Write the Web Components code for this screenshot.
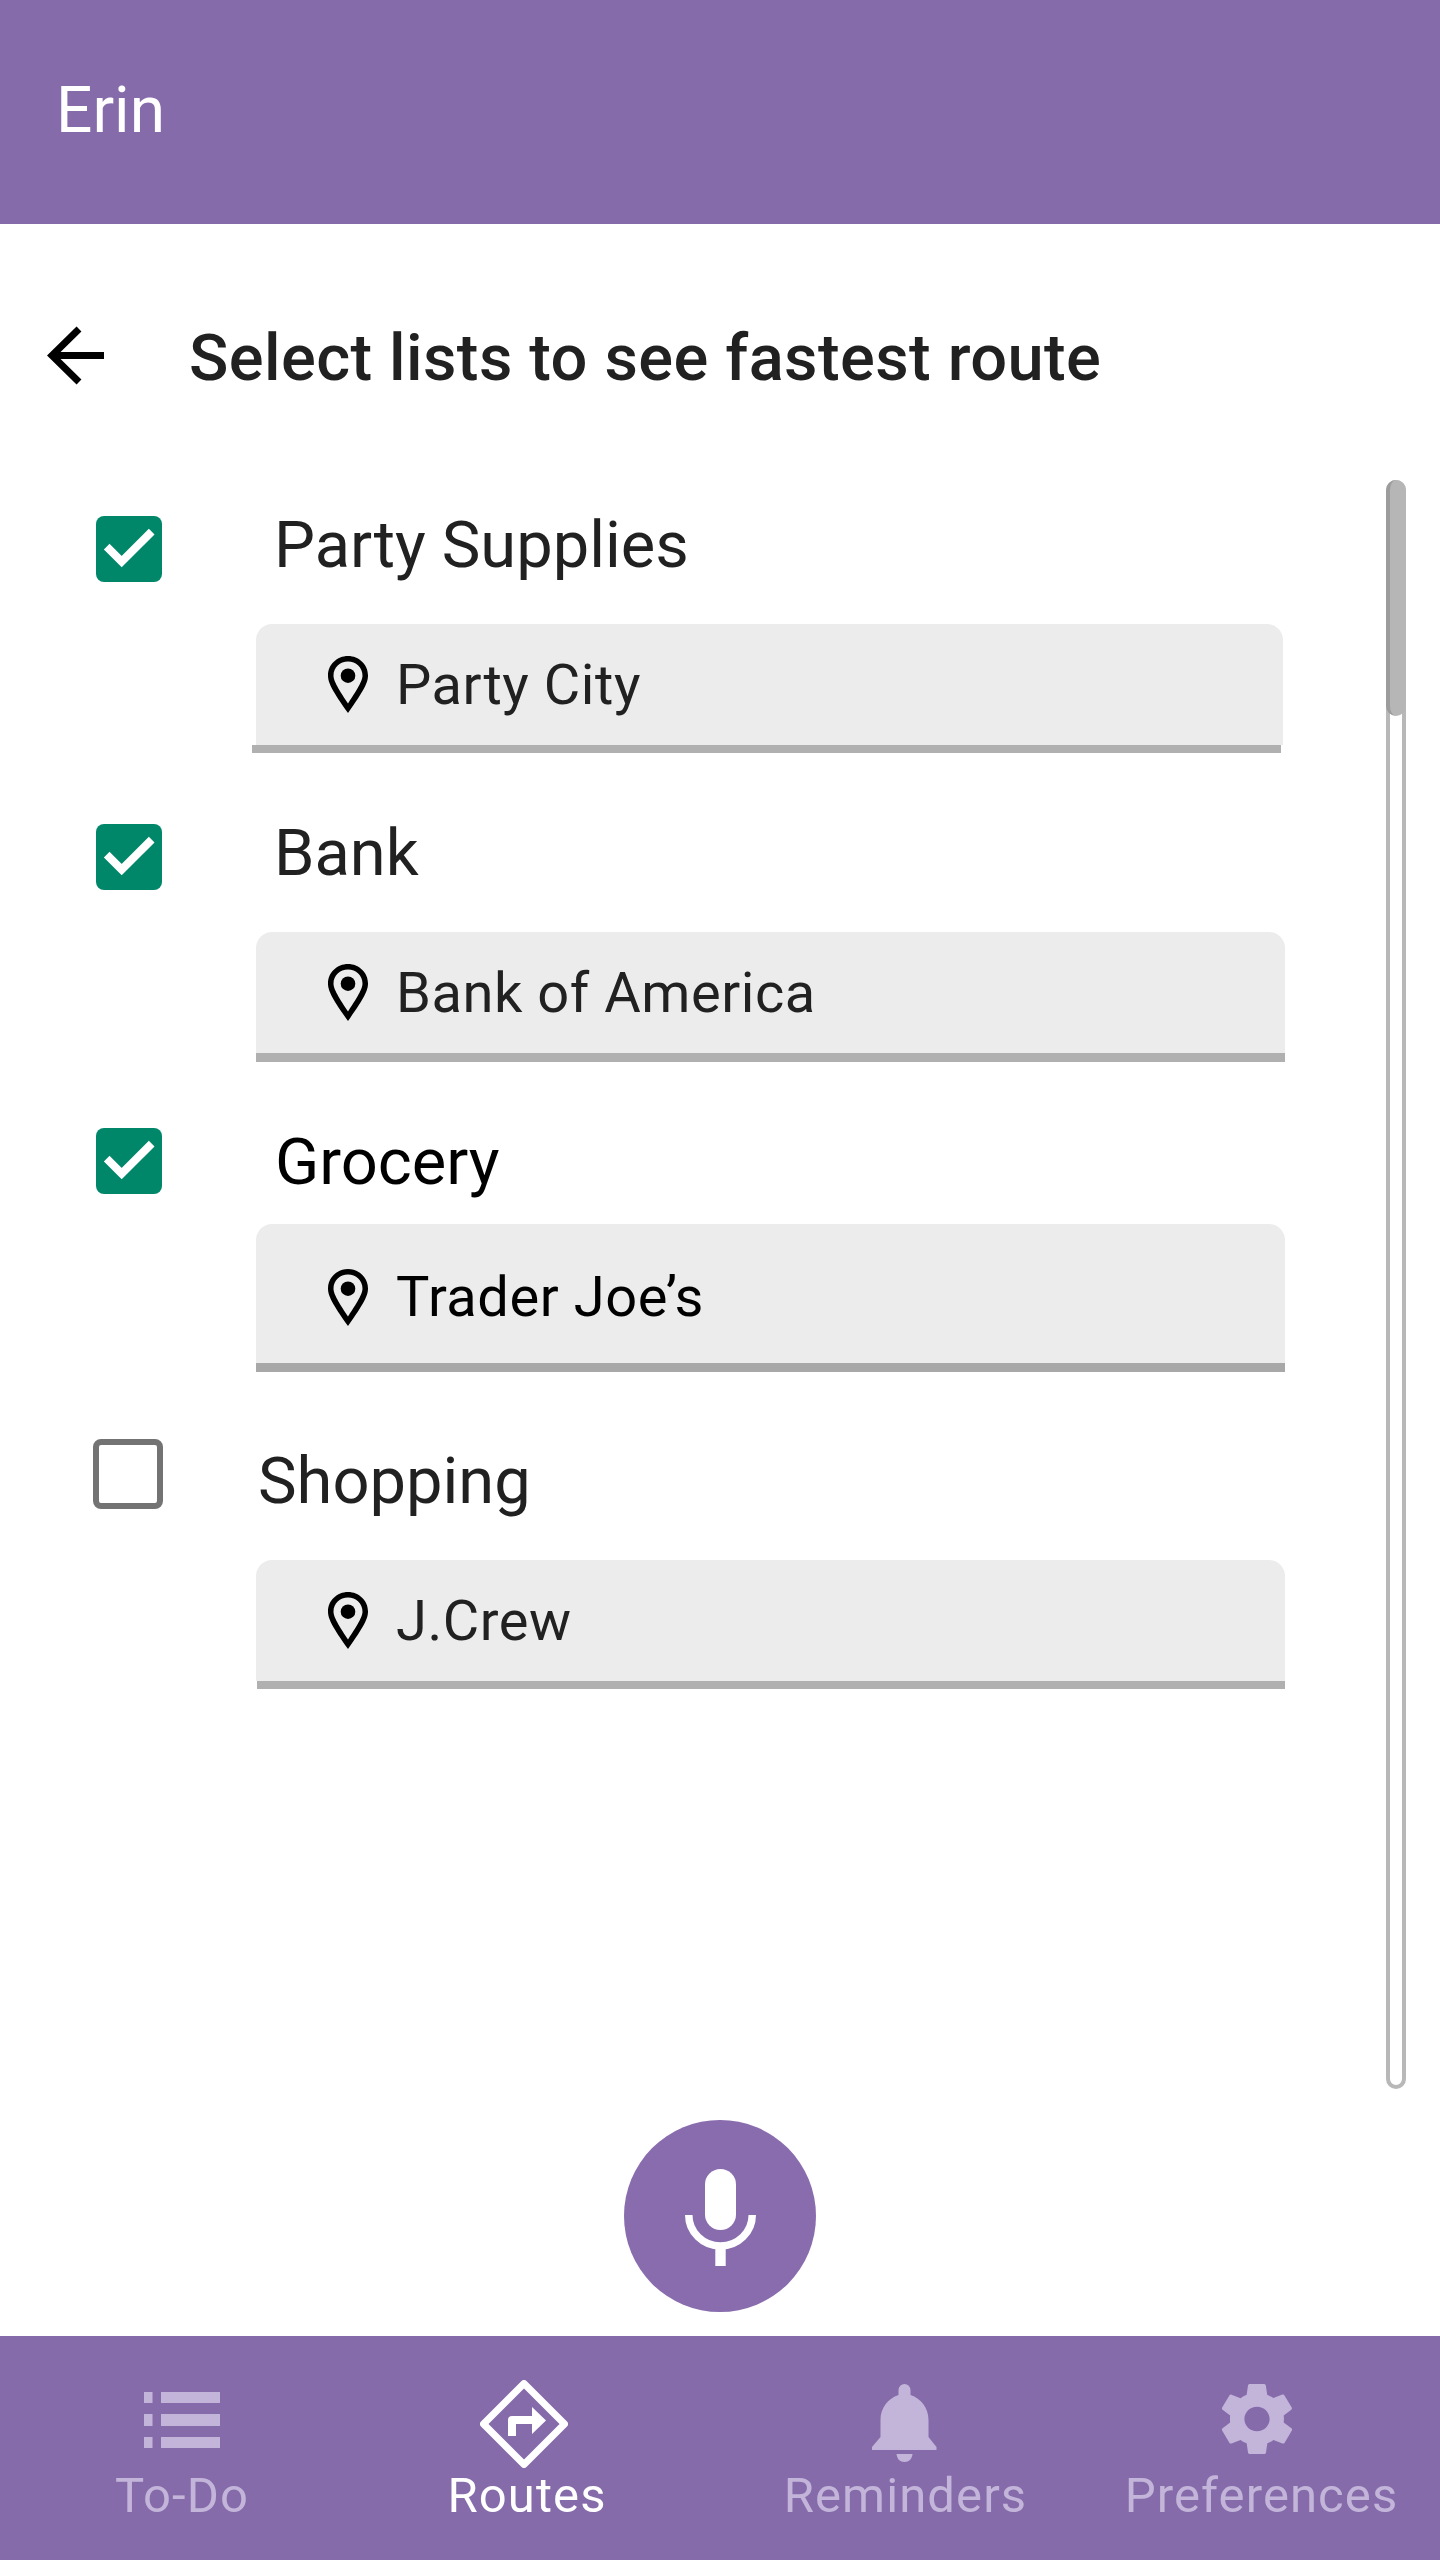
<!doctype html>
<html>
<head>
<meta charset="utf-8">
<style>
  html, body { margin: 0; height: 100%; }
  body {
    width: 1440px;
    height: 2560px;
    display: flex;
    flex-direction: column;
    background: #fff;
    color: #212121;
    font-family: Roboto, "Liberation Sans", sans-serif;
    overflow: hidden;
  }
</style>
</head>
<body>
  <app-header>Erin</app-header>
  <page-title>Select lists to see fastest route</page-title>
  <list-pane>
    <route-row checked label="Party Supplies" style="--head-h:144px;--check-y:36px;--label-y:33px;--label-x:274px;--chip-w:1027px;--rule-x:252px;--rule-h:8px">Party City</route-row>
    <route-row checked label="Bank" style="--head-h:179px;--check-y:71px;--label-y:68px;--label-x:274px">Bank of America</route-row>
    <route-row checked label="Grocery" style="--head-h:162px;--check-y:66px;--label-y:68px;--label-x:275px;--ink:#000;--chip-h:139px;--chip-pad:7px;--rule-c:#a8a8a8">Trader Joe’s</route-row>
    <route-row label="Shopping" style="--head-h:188px;--check-y:67px;--label-y:77px;--label-x:258px;--rule-x:257px;--rule-w:1028px;--rule-h:8px">J.Crew</route-row>
  </list-pane>
  <mic-button></mic-button>
  <bottom-nav>
    <nav-item icon="list" style="--icon-lift:8px">To-Do</nav-item>
    <nav-item icon="route" active style="--icon-left:6px">Routes</nav-item>
    <nav-item icon="bell" style="--icon-lift:2px;--icon-left:2px">Reminders</nav-item>
    <nav-item icon="gear" style="--icon-lift:10px;--icon-left:10px">Preferences</nav-item>
  </bottom-nav>

<script>
class AppHeader extends HTMLElement {
  constructor() {
    super();
    this.attachShadow({mode: 'open'}).innerHTML = `
      <style>
        :host {
          display: flex;
          align-items: center;
          flex: none;
          height: 224px;
          box-sizing: border-box;
          padding: 0 0 4px 56px;
          background: #866bab;
          color: #fff;
          font-size: 64px;
          font-weight: 400;
        }
      </style>
      <slot></slot>`;
  }
}

class PageTitle extends HTMLElement {
  constructor() {
    super();
    this.attachShadow({mode: 'open'}).innerHTML = `
      <style>
        :host {
          display: flex;
          align-items: center;
          flex: none;
          height: 256px;
          box-sizing: border-box;
          padding: 12px 0 0 46px;
          font-size: 65px;
          font-weight: 500;
          letter-spacing: 0.4px;
          color: #212121;
        }
        svg { width: 60px; height: 60px; flex: none; margin: 0 83px 5px 0; }
      </style>
      <svg viewBox="0 0 60 60"><path d="M58 29.500H6M33 3L6 29.500 33 56" fill="none" stroke="#000" stroke-width="7"/></svg>
      <slot></slot>`;
  }
}

class ListPane extends HTMLElement {
  constructor() {
    super();
    this.attachShadow({mode: 'open'}).innerHTML = `
      <style>
        :host {
          display: flex;
          flex: none;
          height: 1640px;
          box-sizing: border-box;
        }
        .rows { flex: 1; min-width: 0; }
        .track {
          flex: none;
          align-self: flex-start;
          position: relative;
          width: 20px;
          height: 1609px;
          margin-right: 34px;
          box-sizing: border-box;
          border: 4px solid #b8b8b8;
          border-radius: 10px;
        }
        .thumb {
          position: absolute;
          left: -4px;
          top: -4px;
          width: 20px;
          height: 236px;
          box-sizing: border-box;
          background: #b6b6b6;
          border-left: 4px solid #9c9c9c;
          border-radius: 10px;
        }
      </style>
      <div class="rows"><slot></slot></div>
      <div class="track"><div class="thumb"></div></div>`;
  }
}

const checkMark = `<svg viewBox="0 0 66 66" width="66" height="66"><path d="M10.700 30.700l15 15 30-30" fill="none" stroke="#fff" stroke-width="8"/></svg>`;

class RouteRow extends HTMLElement {
  constructor() {
    super();
    const checked = this.hasAttribute('checked');
    this.attachShadow({mode: 'open'}).innerHTML = `
      <style>
        :host {
          display: block;
          color: var(--ink, #212121);
        }
        .head {
          display: grid;
          grid-template-columns: var(--label-x) 1fr;
          align-items: start;
          height: var(--head-h);
        }
        .box {
          box-sizing: border-box;
          margin: var(--check-y) 0 0 96px;
          width: 66px;
          height: 66px;
          border-radius: 8px;
          background: #00876a;
        }
        .box.off {
          margin-left: 93px;
          width: 70px;
          height: 70px;
          background: none;
          border: 6px solid #737373;
        }
        .box svg { display: block; }
        .label {
          margin-top: var(--label-y);
          font-size: 65px;
          line-height: 64px;
        }
        .chip {
          display: flex;
          align-items: center;
          box-sizing: border-box;
          margin-left: 256px;
          width: var(--chip-w, 1029px);
          height: var(--chip-h, 121px);
          padding: var(--chip-pad, 0px) 0 0 72px;
          background: #ececec;
          border-radius: 16px 16px 0 0;
          font-size: 56px;
          letter-spacing: 0.55px;
        }
        .rule {
          margin-left: var(--rule-x, 256px);
          width: var(--rule-w, 1029px);
          height: var(--rule-h, 9px);
          background: var(--rule-c, #b0b0b0);
        }
        .chip svg { width: 40px; height: 57px; flex: none; margin-right: 28px; }
      </style>
      <div class="head">
        <div class="box ${checked ? '' : 'off'}">${checked ? checkMark : ''}</div>
        <div class="label">${this.getAttribute('label')}</div>
      </div>
      <div class="chip">
        <svg viewBox="0 0 40 57"><path fill-rule="evenodd" d="M20 0C9 0 0 8.500 0 19.500c0 7 4 15 20 37.500C36 34.500 40 26.500 40 19.500 40 8.500 31 0 20 0zm0 5.500c8 0 14.500 6 14.500 14 0 4.500-3 10.500-14.500 28C8.500 30 5.500 24 5.500 19.500c0-8 6.500-14 14.500-14z"/><circle cx="20" cy="19.700" r="7.300"/></svg>
        <slot></slot>
      </div>
      <div class="rule"></div>`;
  }
}

class MicButton extends HTMLElement {
  constructor() {
    super();
    this.attachShadow({mode: 'open'}).innerHTML = `
      <style>
        :host {
          display: flex;
          flex: none;
          justify-content: center;
          height: 216px;
        }
        .fab {
          display: flex;
          align-items: center;
          justify-content: center;
          width: 192px;
          height: 192px;
          border-radius: 50%;
          background: #896cae;
        }
        svg { width: 71px; height: 97px; margin-top: 3px; }
      </style>
      <div class="fab">
        <svg viewBox="0 0 71 97"><rect x="20" y="0" width="31" height="61" rx="15.500" fill="#fff"/><path d="M3.750 46a31.750 31 0 0 0 63.500 0" fill="none" stroke="#fff" stroke-width="7.500"/><path d="M35.500 74V97" fill="none" stroke="#fff" stroke-width="10.400"/></svg>
      </div>`;
  }
}

class BottomNav extends HTMLElement {
  constructor() {
    super();
    this.attachShadow({mode: 'open'}).innerHTML = `
      <style>
        :host {
          display: grid;
          grid-template-columns: 364px 326px 431px 281px;
          flex: none;
          height: 224px;
          background: #866bab;
        }
      </style>
      <slot></slot>`;
  }
}

const navIcons = {
  list: `<svg width="76" height="56" viewBox="0 0 76 56"><path d="M0 0h8.500v11H0zM17 0h59v11H17zM0 22h8.500v12H0zM17 22h59v12H17zM0 45h8.500v11H0zM17 45h59v11H17z"/></svg>`,
  route: `<svg width="88" height="88" viewBox="0 0 88 88"><path d="M44 3.500L84.500 44 44 84.500 3.500 44z" fill="none" stroke="currentColor" stroke-width="7" stroke-linejoin="round"/><path d="M28 56V40c0-2.500 1.500-4 4-4H52V27L66 40.500 52 54V44H36V56z"/></svg>`,
  bell: `<svg width="64.500" height="78" viewBox="0 0 64.500 78"><path d="M26.500 11V6a6 6 0 0 1 12 0v5C49 14.500 56.500 24 56.500 36V53L64.500 63V66H0V63L8.500 53V36C8.500 24 16 14.500 26.500 11zM24.500 70h16c-.5 5-3.500 8-8 8s-7.500-3-8-8z"/></svg>`,
  gear: `<svg width="70" height="70" viewBox="2.300 2 19.400 20" preserveAspectRatio="none"><path d="M19.400 13c.04-.32.06-.66.06-1s-.02-.68-.06-1l2.100-1.650c.19-.15.24-.42.12-.64l-2-3.460c-.12-.22-.38-.3-.6-.22l-2.500 1c-.52-.4-1.080-.73-1.690-.98l-.38-2.650A.49.49 0 0 0 14 2h-4c-.25 0-.46.18-.49.420l-.38 2.650c-.61.25-1.170.59-1.690.98l-2.500-1c-.23-.09-.48 0-.6.220l-2 3.460c-.13.220-.07.490.12.640L4.560 11c-.04.32-.06.66-.06 1s.02.68.06 1l-2.100 1.650c-.19.15-.25.42-.12.64l2 3.460c.12.22.38.3.6.22l2.500-1c.52.4 1.080.73 1.690.98l.38 2.650c.03.24.24.42.49.42h4c.25 0 .46-.18.49-.42l.38-2.650c.61-.25 1.170-.59 1.690-.98l2.500 1c.23.09.48 0 .6-.22l2-3.460c.12-.22.07-.49-.12-.64L19.400 13zM12 15.500c-1.930 0-3.500-1.570-3.500-3.500s1.570-3.500 3.500-3.500 3.500 1.570 3.500 3.500-1.570 3.500-3.500 3.500z"/></svg>`
};

class NavItem extends HTMLElement {
  constructor() {
    super();
    const on = this.hasAttribute('active');
    this.attachShadow({mode: 'open'}).innerHTML = `
      <style>
        :host {
          display: flex;
          flex-direction: column;
          align-items: center;
          color: ${on ? '#fff' : '#c3b5d9'};
          font-size: 49px;
          font-weight: 400;
        }
        .icon {
          display: flex;
          align-items: center;
          justify-content: center;
          height: 88px;
          margin: 44px var(--icon-left, 0px) 0 0;
        }
        svg { display: block; fill: currentColor; margin-bottom: var(--icon-lift, 0px); }
        .text { line-height: 56px; letter-spacing: 1.1px; }
      </style>
      <div class="icon">${navIcons[this.getAttribute('icon')]}</div>
      <div class="text"><slot></slot></div>`;
  }
}

customElements.define('app-header', AppHeader);
customElements.define('page-title', PageTitle);
customElements.define('list-pane', ListPane);
customElements.define('route-row', RouteRow);
customElements.define('mic-button', MicButton);
customElements.define('bottom-nav', BottomNav);
customElements.define('nav-item', NavItem);
</script>
</body>
</html>
